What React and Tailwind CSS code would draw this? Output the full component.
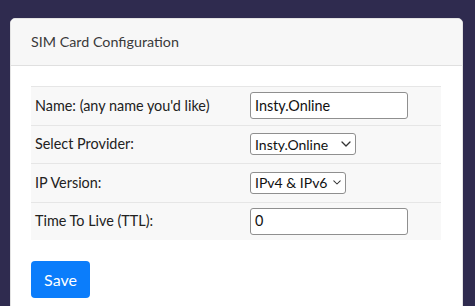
import React from 'react';

const Chevron = ({ w = 10 }) => (
  <svg width={w} height={w * 0.6} viewBox="0 0 10 6" fill="none" stroke="#333" strokeWidth="1.3" strokeLinecap="round" strokeLinejoin="round">
    <path d="M1 1l4 4 4-4" />
  </svg>
);

const TextInput = ({ value }) => (
  <div className="w-[158px] h-[27px] border border-[#8f8f8f] rounded-[3px] bg-white flex items-center px-[4px] text-[14.4px] text-[#111]">
    {value}
  </div>
);

const Select = ({ value, width, chev }) => (
  <div className={`${width} h-[22px] border border-[#8f8f8f] rounded-[3px] bg-white flex items-center justify-between pl-[4px] pr-[4px] text-[14px] text-[#111] whitespace-nowrap`}>
    <span>{value}</span>
    <Chevron w={chev} />
  </div>
);

const rows = [
  { label: "Name: (any name you'd like)", field: <TextInput value="Insty.Online" /> },
  { label: 'Select Provider:', field: <Select value="Insty.Online" width="w-[106px]" chev={10} /> },
  { label: 'IP Version:', field: <Select value="IPv4 & IPv6" width="w-[96px]" chev={8} /> },
  { label: 'Time To Live (TTL):', field: <TextInput value="0" /> },
];

export default function App() {
  return (
    <div className="w-[475px] h-[306px] overflow-hidden bg-[#2f2b4f] pt-[18px] px-[10px]" style={{ fontFamily: 'Lato, "Open Sans", sans-serif' }}>
      <div className="w-[453px] h-[400px] bg-white border border-[#e3e3e3] rounded-[5px]">
        <div className="h-[47px] bg-[#f7f7f7] border-b border-[#e0e0e0] rounded-t-[5px] px-[20px] flex items-center text-[14.3px] text-[#3a3a3a]">
          SIM Card Configuration
        </div>
        <div className="px-[20px] pt-[20px]">
          <div className="w-[410px]">
            {rows.map((r, i) => (
              <div key={i} className="h-[38.5px] bg-[#f8f8f8] border-t border-[#e6e6e6] flex items-center">
                <div className="w-[219px] pl-[4px] text-[14.4px] text-[#222]">{r.label}</div>
                <div className="flex-1">{r.field}</div>
              </div>
            ))}
          </div>
          <button className="mt-[21px] w-[59px] h-[37px] bg-[#0b7dfb] rounded-[4px] text-white text-[16px] flex items-center justify-center">
            Save
          </button>
        </div>
      </div>
    </div>
  );
}
